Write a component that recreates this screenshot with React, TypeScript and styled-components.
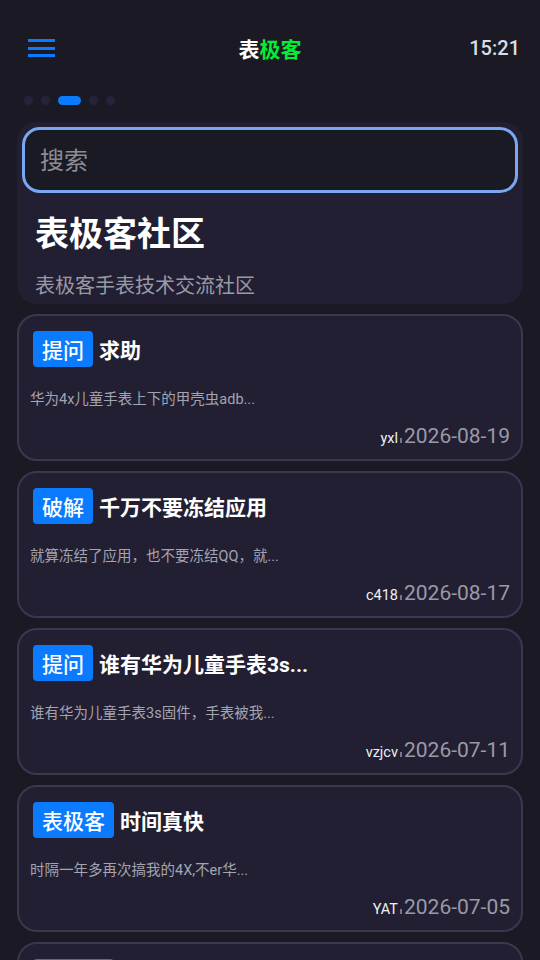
import styled, { createGlobalStyle } from "styled-components";
import React, { useState } from "react";

const GlobalStyle = createGlobalStyle`
  html, body {
    margin: 0;
    padding: 0;
    background: #1b1a24;
    font-family: Roboto, "Noto Sans CJK SC", sans-serif;
  }
  * {
    box-sizing: border-box;
  }
`;

const Page = styled.div`
  width: 540px;
  height: 960px;
  overflow: hidden;
  background: #1b1a24;
  color: #fff;
`;

const Header = styled.header`
  height: 96px;
  display: flex;
  align-items: center;
  justify-content: space-between;
  padding: 0 20px 0 28px;
  position: relative;
`;

const MenuButton = styled.button`
  width: 27px;
  height: 18px;
  padding: 0;
  border: none;
  background: none;
  display: flex;
  flex-direction: column;
  justify-content: space-between;
  cursor: pointer;

  span {
    display: block;
    height: 3px;
    background: #0a7bff;
  }
`;

const Logo = styled.h1`
  margin: 0;
  font-size: 21px;
  font-weight: 700;
  color: #fff;
  position: absolute;
  left: 50%;
  transform: translateX(-50%);
`;

const Green = styled.span`
  color: #00ee33;
`;

const Clock = styled.span`
  font-size: 20px;
  font-weight: 500;
  color: #dcdce4;
`;

const Dots = styled.div`
  display: flex;
  align-items: center;
  gap: 8px;
  padding-left: 24px;
  height: 9px;
  margin-bottom: 17px;
`;

const Dot = styled.span<{ active: boolean }>`
  width: ${(p) => (p.active ? "23px" : "9px")};
  height: 9px;
  border-radius: 5px;
  background: ${(p) => (p.active ? "#0a7bff" : "#25233a")};
`;

const Content = styled.main`
  padding: 0 17px;
  display: flex;
  flex-direction: column;
  gap: 10px;
`;

const Hero = styled.section`
  background: #221f33;
  border-radius: 20px;
  padding: 5px 5px 6px;
`;

const Search = styled.input`
  width: 100%;
  height: 66px;
  border: 3px solid #7aa7f2;
  border-radius: 18px;
  background: #1a1a24;
  color: #fff;
  font-family: inherit;
  font-size: 24px;
  padding: 2px 15px 0;
  outline: none;

  &::placeholder {
    color: #8c8c94;
  }
`;

const HeroTitle = styled.h2`
  margin: 20px 0 0 13px;
  font-size: 34px;
  line-height: 42px;
  font-weight: 700;
`;

const HeroSub = styled.p`
  margin: 19px 0 0 13px;
  font-size: 20px;
  line-height: 24px;
  color: #9a9aa6;
`;

const Card = styled.article`
  background: #221f33;
  border: 2px solid #383850;
  border-radius: 20px;
  height: 147px;
  padding: 15px 11px 10px 14px;
  display: flex;
  flex-direction: column;
  flex-shrink: 0;
`;

const TitleRow = styled.div`
  display: flex;
  align-items: center;
  gap: 6px;
  height: 36px;
`;

const Tag = styled.span`
  background: #0a7bff;
  color: #fff;
  border-radius: 4px;
  height: 36px;
  padding: 0 9px;
  display: flex;
  align-items: center;
  font-size: 21px;
  font-weight: 500;
`;

const PostTitle = styled.h3`
  margin: 0;
  font-size: 21px;
  font-weight: 700;
  white-space: nowrap;
`;

const Excerpt = styled.p`
  margin: 23px 0 0 -3px;
  font-size: 14.5px;
  line-height: 20px;
  color: #a4a4b0;
`;

const Meta = styled.div`
  margin-top: 14px;
  display: flex;
  justify-content: flex-end;
  align-items: baseline;
  line-height: 24px;
`;

const Author = styled.span`
  font-size: 14.5px;
  color: #f0f0f4;
`;

const Sep = styled.span`
  display: inline-block;
  width: 2px;
  height: 5px;
  margin: 0 2px;
  background: #77778a;
`;

const Date = styled.span`
  font-size: 21px;
  color: #9a9aa6;
`;

const posts = [
  { tag: "提问", title: "求助", excerpt: "华为4x儿童手表上下的甲壳虫adb...", author: "yxl", date: "2026-08-19" },
  { tag: "破解", title: "千万不要冻结应用", excerpt: "就算冻结了应用，也不要冻结QQ，就...", author: "c418", date: "2026-08-17" },
  { tag: "提问", title: "谁有华为儿童手表3s...", excerpt: "谁有华为儿童手表3s固件，手表被我...", author: "vzjcv", date: "2026-07-11" },
  { tag: "表极客", title: "时间真快", excerpt: "时隔一年多再次搞我的4X,不er华...", author: "YAT", date: "2026-07-05" },
  { tag: "表极客", title: "新人报道", excerpt: "大家好，我是新来的...", author: "abc", date: "2026-07-01" },
];

export default function App() {
  const [query, setQuery] = useState("");
  const [slide] = useState(2);

  return (
    <Page>
      <GlobalStyle />
      <Header>
        <MenuButton aria-label="menu">
          <span />
          <span />
          <span />
        </MenuButton>
        <Logo>
          表<Green>极客</Green>
        </Logo>
        <Clock>15:21</Clock>
      </Header>
      <Dots>
        {[0, 1, 2, 3, 4].map((i) => (
          <Dot key={i} active={i === slide} />
        ))}
      </Dots>
      <Content>
        <Hero>
          <Search
            placeholder="搜索"
            value={query}
            onChange={(e) => setQuery(e.target.value)}
          />
          <HeroTitle>表极客社区</HeroTitle>
          <HeroSub>表极客手表技术交流社区</HeroSub>
        </Hero>
        {posts.map((p, i) => (
          <Card key={i}>
            <TitleRow>
              <Tag>{p.tag}</Tag>
              <PostTitle>{p.title}</PostTitle>
            </TitleRow>
            <Excerpt>{p.excerpt}</Excerpt>
            <Meta>
              <Author>{p.author}</Author>
              <Sep />
              <Date>{p.date}</Date>
            </Meta>
          </Card>
        ))}
      </Content>
    </Page>
  );
}
